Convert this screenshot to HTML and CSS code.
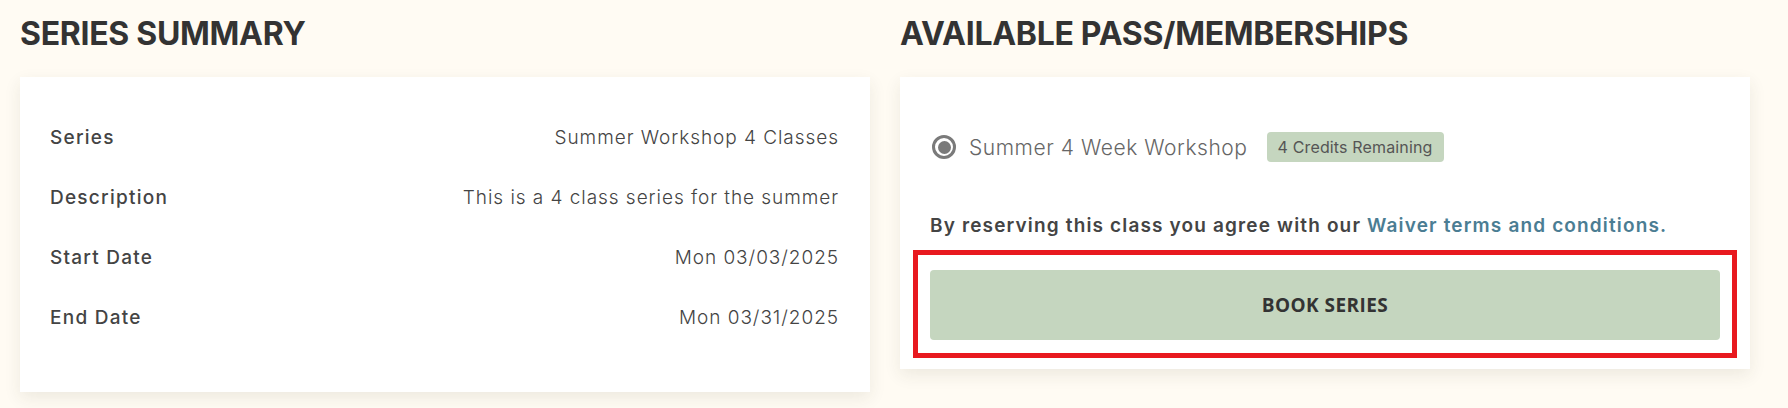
FILE: index.html
```html
<!DOCTYPE html>
<html lang="en">
<head>
<meta charset="utf-8">
<title>Series Summary</title>
<link rel="stylesheet" href="styles.css">
</head>
<body>
<main class="layout">
  <section class="column">
    <h2 class="section-title">SERIES SUMMARY</h2>
    <div class="card summary-card">
      <div class="row"><span class="label">Series</span><span class="value">Summer Workshop 4 Classes</span></div>
      <div class="row"><span class="label">Description</span><span class="value">This is a 4 class series for the summer</span></div>
      <div class="row"><span class="label">Start Date</span><span class="value">Mon 03/03/2025</span></div>
      <div class="row"><span class="label">End Date</span><span class="value">Mon 03/31/2025</span></div>
    </div>
  </section>
  <section class="column">
    <h2 class="section-title">AVAILABLE PASS/MEMBERSHIPS</h2>
    <div class="card pass-card">
      <label class="option">
        <span class="radio"><span class="radio-dot"></span></span>
        <span class="option-name">Summer 4 Week Workshop</span>
        <span class="badge">4 Credits Remaining</span>
      </label>
      <p class="agree">By reserving this class you agree with our <a class="link" href="#">Waiver terms and conditions.</a></p>
      <div class="highlight">
        <button class="book-btn" type="button">BOOK SERIES</button>
      </div>
    </div>
  </section>
</main>
</body>
</html>
```

FILE: styles.css
```css
* { box-sizing: border-box; }
html, body { margin: 0; padding: 0; }
body {
  background: #fffbf3;
  font-family: Inter, "Noto Sans", sans-serif;
  color: #444;
  width: 1788px;
  height: 408px;
  overflow: hidden;
}
.layout {
  display: grid;
  grid-template-columns: 850px 850px;
  column-gap: 30px;
  padding: 15px 20px 0;
  align-items: start;
}
.section-title {
  margin: 0 0 24px;
  font-size: 32px;
  line-height: 38px;
  font-weight: 700;
  color: #333;
  letter-spacing: -0.3px;
}
.section-title-wide { letter-spacing: 0; }
.card {
  background: #fff;
  box-shadow: 0 6px 16px rgba(60, 50, 30, 0.09);
}
.summary-card {
  padding: 30px 31px 45px 30px;
}
.row {
  display: flex;
  justify-content: space-between;
  align-items: center;
  height: 60px;
  font-size: 19px;
}
.label {
  font-weight: 500;
  color: #444;
  letter-spacing: 1.25px;
}
.value {
  font-weight: 300;
  color: #444;
  letter-spacing: 0.95px;
}
.pass-card {
  padding: 55px 13px 11px;
}
.option {
  display: flex;
  align-items: center;
  height: 30px;
  padding-left: 19px;
}
.radio {
  width: 24px;
  height: 24px;
  border: 3px solid #7a7a7a;
  border-radius: 50%;
  display: flex;
  align-items: center;
  justify-content: center;
  margin-right: 13px;
  flex: none;
}
.radio-dot {
  width: 13px;
  height: 13px;
  border-radius: 50%;
  background: #7a7a7a;
}
.option-name {
  font-size: 21px;
  font-weight: 300;
  color: #666;
  letter-spacing: 0.55px;
}
.badge {
  margin-left: 19px;
  height: 30px;
  display: flex;
  align-items: center;
  padding: 0 11px;
  background: #c5d6bf;
  border-radius: 4px;
  font-size: 16px;
  font-weight: 400;
  color: #555;
  letter-spacing: 0.15px;
}
.agree {
  margin: 52px 0 0;
  padding-left: 17px;
  font-size: 19px;
  line-height: 24px;
  font-weight: 600;
  color: #444;
  letter-spacing: 1.15px;
}
.link {
  color: #4b7d93;
  text-decoration: none;
}
.highlight {
  margin-top: 12px;
  border: 5px solid #e8191f;
  padding: 15px 12px 13px;
}
.book-btn {
  display: block;
  width: 100%;
  height: 70px;
  border: 0;
  border-radius: 4px;
  background: #c5d6bf;
  font-family: "Open Sans", "Noto Sans", sans-serif;
  font-size: 19px;
  font-weight: 700;
  color: #333;
  letter-spacing: 0.45px;
  cursor: pointer;
}
```
